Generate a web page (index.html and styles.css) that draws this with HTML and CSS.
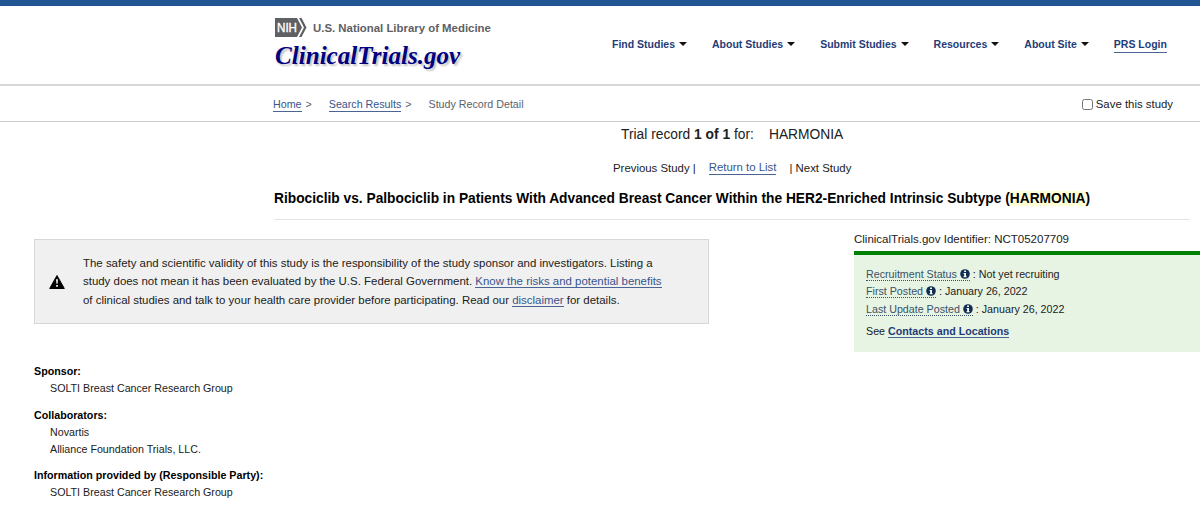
FILE: index.html
```html
<!DOCTYPE html>
<html lang="en">
<head>
    <meta charset="UTF-8">
    <title>Ribociclib vs. Palbociclib - ClinicalTrials.gov</title>
    <meta name="viewport" content="width=device-width, initial-scale=1">
    <link rel="stylesheet" href="styles.css">
</head>
<body>

<!-- Header -->
<header class="header">
    <div class="brand">
        <div class="nlm">
            <svg class="nih" width="32" height="19" viewBox="0 0 32 19">
                <path d="M0 0H22L27 9.5L22 19H0Z" fill="#5e6063"/>
                <path d="M24 0H26.5L31.5 9.5L26.5 19H24L29 9.5Z" fill="#5e6063"/>
                <text x="2" y="14" class="nih-text" textLength="20" lengthAdjust="spacingAndGlyphs">NIH</text>
            </svg>
            <span>U.S. National Library of Medicine</span>
        </div>
        <a class="logo" href="#">ClinicalTrials.gov</a>
    </div>
    <nav class="nav">
        <a href="#">Find Studies<i class="caret"></i></a>
        <a href="#">About Studies<i class="caret"></i></a>
        <a href="#">Submit Studies<i class="caret"></i></a>
        <a href="#">Resources<i class="caret"></i></a>
        <a href="#">About Site<i class="caret"></i></a>
        <a href="#" class="login">PRS Login</a>
    </nav>
</header>

<!-- Breadcrumbs -->
<div class="crumbs">
    <a href="#" class="link">Home</a>
    <span class="sep">&gt;</span>
    <a href="#" class="link">Search Results</a>
    <span class="sep">&gt;</span>
    <span>Study Record Detail</span>
    <label class="save"><input type="checkbox">Save this study</label>
</div>

<!-- Record navigation -->
<div class="record">Trial record <b>1 of 1</b> for:<span class="term">HARMONIA</span></div>
<div class="pager">
    <span>Previous Study |</span>
    <a href="#" class="link">Return to List</a>
    <span>| Next Study</span>
</div>

<h1 class="title">Ribociclib vs. Palbociclib in Patients With Advanced Breast Cancer Within the HER2-Enriched Intrinsic Subtype (<mark>HARMONIA</mark>)</h1>

<main class="main">
    <div class="left">
        <div class="notice">
            <svg width="16" height="14" viewBox="0 0 16 14">
                <path d="M8 0.5L15.3 13.5H0.7Z" fill="#000" stroke="#000" stroke-linejoin="round"/>
                <path d="M7 4.2H9L8.6 8.8H7.4ZM7.1 10H8.9V11.8H7.1Z" fill="#f0f0f0"/>
            </svg>
            <p>The safety and scientific validity of this study is the responsibility of the study sponsor and investigators. Listing a<br>
            study does not mean it has been evaluated by the U.S. Federal Government. <a href="#" class="link">Know the risks and potential benefits</a><br>
            of clinical studies and talk to your health care provider before participating. Read our <a href="#" class="link">disclaimer</a> for details.</p>
        </div>

        <dl class="sponsors">
            <dt>Sponsor:</dt>
            <dd>SOLTI Breast Cancer Research Group</dd>
            <dt>Collaborators:</dt>
            <dd>Novartis</dd>
            <dd>Alliance Foundation Trials, LLC.</dd>
            <dt class="party">Information provided by (Responsible Party):</dt>
            <dd>SOLTI Breast Cancer Research Group</dd>
        </dl>
    </div>

    <aside class="side">
        <div class="identifier">ClinicalTrials.gov Identifier: NCT05207709</div>
        <div class="status">
            <div class="row">
                <a href="#" class="term-link">Recruitment Status <svg class="info" viewBox="0 0 10 10"><circle cx="5" cy="5" r="4.8"/><path d="M4.1 1.5H6V3H4.1ZM3.6 4H6V7.2H6.6V8.3H3.5V7.2H4.2V5H3.6Z"/></svg></a> : Not yet recruiting
            </div>
            <div class="row">
                <a href="#" class="term-link">First Posted <svg class="info" viewBox="0 0 10 10"><circle cx="5" cy="5" r="4.8"/><path d="M4.1 1.5H6V3H4.1ZM3.6 4H6V7.2H6.6V8.3H3.5V7.2H4.2V5H3.6Z"/></svg></a> : January 26, 2022
            </div>
            <div class="row">
                <a href="#" class="term-link">Last Update Posted <svg class="info" viewBox="0 0 10 10"><circle cx="5" cy="5" r="4.8"/><path d="M4.1 1.5H6V3H4.1ZM3.6 4H6V7.2H6.6V8.3H3.5V7.2H4.2V5H3.6Z"/></svg></a> : January 26, 2022
            </div>
            <div class="row see">See <a href="#" class="link">Contacts and Locations</a></div>
        </div>
    </aside>
</main>

</body>
</html>
```
FILE: styles.css
```css
* {
    box-sizing: border-box;
    margin: 0;
    padding: 0;
}

body {
    font-family: "Liberation Sans", Arial, sans-serif;
    font-size: 10.7px;
    color: #212121;
    background: #fff;
    white-space: nowrap;
    overflow: hidden;
}

a {
    text-decoration: none;
}

.link {
    color: #38558c;
    border-bottom: 1px solid #4a6494;
}

/* Header */
.header {
    display: flex;
    height: 86px;
    border-top: 6px solid #205493;
    border-bottom: 2px solid #d6d7d9;
    padding-left: 275px;
}

.brand {
    width: 337px;
    padding-top: 12px;
}

.nlm {
    display: flex;
    align-items: center;
    gap: 6px;
    height: 19px;
    font-size: 11.4px;
    font-weight: bold;
    color: #5e6063;
}

.nih-text {
    font-size: 13px;
    font-weight: normal;
    fill: #fff;
    stroke: #fff;
    stroke-width: 0.4px;
}

.logo {
    display: block;
    padding-top: 2px;
    font: italic bold 25.1px/34px "Liberation Serif", "Times New Roman", serif;
    color: #000080;
    text-shadow: 2px 2px 2px #c4c4c4;
}

.nav {
    display: flex;
    gap: 25px;
    padding-top: 31px;
    font-size: 10.5px;
    font-weight: bold;
    line-height: 14px;
}

.nav a {
    height: 15px;
    color: #1f3c78;
}

.caret {
    display: inline-block;
    margin-left: 4px;
    border: 4px solid transparent;
    border-top-color: #111;
    border-bottom: 0;
    vertical-align: 2px;
}

.nav .login {
    height: 16px;
    border-bottom: 1px solid #4a6494;
}

/* Breadcrumbs */
.crumbs {
    display: flex;
    align-items: center;
    height: 36px;
    padding: 2px 27px 0 273px;
    border-bottom: 1px solid #cacbcd;
    color: #5b616b;
    line-height: 13px;
}

.sep {
    margin: 0 17px 0 4px;
}

.save {
    display: flex;
    align-items: center;
    margin-left: auto;
    font-size: 11.4px;
    color: #212121;
}

.save input {
    width: 11px;
    height: 11px;
    margin-right: 3px;
}

/* Record navigation */
.record {
    padding: 5px 0 0 621px;
    font-size: 13.8px;
    line-height: 16px;
}

.term {
    margin-left: 15px;
}

.pager {
    display: flex;
    align-items: center;
    gap: 13px;
    padding: 18px 0 0 613px;
    font-size: 11.4px;
    line-height: 13px;
}

.title {
    margin: 9px 10px 0 274px;
    height: 36px;
    border-bottom: 1px solid #e3e3e3;
    font-size: 13.75px;
    line-height: 30px;
    color: #000;
}

.title mark {
    background: #ffffd6;
    color: inherit;
}

.main {
    display: flex;
    gap: 145px;
    padding-left: 34px;
}

.left {
    width: 675px;
    padding-top: 19px;
}

.notice {
    display: flex;
    align-items: center;
    gap: 18px;
    height: 85px;
    padding-left: 14px;
    border: 1px solid #d6d7d9;
    background: #f0f0f0;
    font-size: 11.45px;
    line-height: 18.5px;
}

/* Sponsors */
.sponsors {
    padding-top: 39px;
    line-height: 17px;
}

.sponsors dt {
    font-weight: bold;
    color: #000;
}

.sponsors dd {
    padding-left: 16px;
}

.sponsors dd + dt {
    margin-top: 9.5px;
}

/* Study status */
.side {
    flex: 1;
    padding-top: 12px;
}

.identifier {
    height: 19px;
    font-size: 11.5px;
    line-height: 14px;
}

.status {
    height: 101px;
    padding: 11px 12px;
    border-top: 4px solid #008000;
    background: #e7f4e4;
}

.row {
    height: 17.3px;
    line-height: 17px;
}

.term-link {
    color: #3a5166;
    border-bottom: 1px dotted #3a5166;
}

.info {
    width: 10px;
    height: 10px;
    vertical-align: -1px;
    fill: #112e51;
}

.info path {
    fill: #fff;
}

.see {
    margin-top: 5px;
}

.see .link {
    font-weight: bold;
    color: #1f3c78;
}
```
